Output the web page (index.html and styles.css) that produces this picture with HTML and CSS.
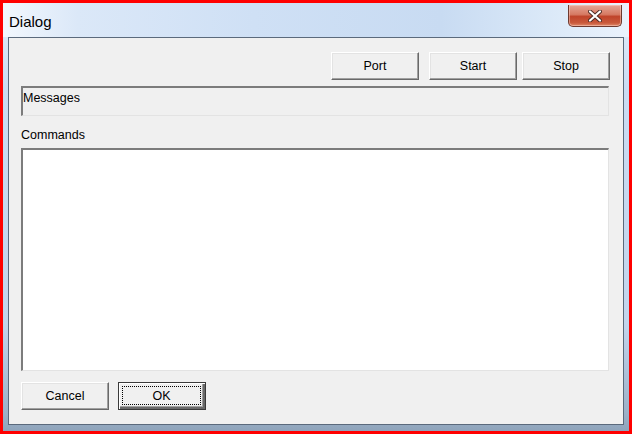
FILE: index.html
```html
<!DOCTYPE html>
<html lang="en">

<head>
  <meta charset="UTF-8">
  <title>Dialog</title>
  <link rel="stylesheet" href="styles.css">
</head>

<body>
  <div class="window">
    <!-- Title bar -->
    <div class="titlebar">
      <span class="title">Dialog</span>
      <button class="close-btn" aria-label="Close">
        <svg width="14" height="12" viewBox="0 0 14 12">
          <path d="M2 1.5 L12 10.5 M12 1.5 L2 10.5" stroke="#4a2a24" stroke-width="4" stroke-linecap="round"/>
          <path d="M2 1.5 L12 10.5 M12 1.5 L2 10.5" stroke="#ffffff" stroke-width="2.2" stroke-linecap="round"/>
        </svg>
      </button>
    </div>

    <!-- Client area -->
    <div class="client">
      <div class="top-buttons">
        <button class="btn">Port</button>
        <button class="btn btn-start">Start</button>
        <button class="btn">Stop</button>
      </div>

      <div class="messages">Messages</div>

      <div class="label">Commands</div>
      <div class="commands"></div>

      <div class="bottom-buttons">
        <button class="btn">Cancel</button>
        <button class="btn btn-default"><span class="focus">OK</span></button>
      </div>
    </div>
  </div>
</body>

</html>
```

FILE: styles.css
```css
body {
  margin: 0;
  padding: 0;
  font-family: "Liberation Sans", Arial, sans-serif;
  background-color: #ff0000;
}

/* Window frame */
.window {
  width: 632px;
  height: 434px;
  box-sizing: border-box;
  border: 3px solid #ff0000;
  padding: 0 5px 6px 5px;
  background: linear-gradient(to bottom, #e4eefa 0%, #cadcf2 20%, #c2d5ec 75%, #9cb1c8 96%, #8fa4bb 100%);
}

/* Title bar */
.titlebar {
  height: 34px;
  display: flex;
  justify-content: space-between;
  align-items: flex-start;
  margin: 0 -5px;
  padding: 0 7px 0 6px;
  background: linear-gradient(to right, #f2f7fd 0%, #dbe8f8 12%, #cfe0f5 40%, #c8dbf2 70%, #deebf9 90%, #eaf2fc 100%);
}

.titlebar .title {
  font-size: 15px;
  color: #000000;
  margin-top: 10px;
}

.close-btn {
  width: 54px;
  height: 22px;
  margin-top: 2px;
  padding: 0;
  border: 1px solid #6e3a30;
  border-top: none;
  border-radius: 0 0 5px 5px;
  background: linear-gradient(to bottom, #e6a797 0%, #d67a63 45%, #c0442a 55%, #c95a3c 85%, #e08a6a 100%);
  box-shadow: inset 0 0 0 1px rgba(255, 220, 210, 0.45);
  display: flex;
  justify-content: center;
  align-items: center;
}

/* Client area */
.client {
  height: 388px;
  box-sizing: border-box;
  border: 1px solid #5b6a7c;
  background-color: #f0f0f0;
  padding: 14px 13px 0 12px;
}

.top-buttons {
  display: flex;
  justify-content: flex-end;
  gap: 5px;
}

.top-buttons .btn-start {
  margin-left: 5px;
}

.btn {
  width: 88px;
  height: 28px;
  padding: 0;
  font-family: "Liberation Sans", Arial, sans-serif;
  font-size: 12.5px;
  color: #000000;
  background-color: #f0f0f0;
  border: 1px solid;
  border-color: #ffffff #696969 #696969 #ffffff;
  box-shadow: inset -1px -1px 0 #a0a0a0, inset 1px 1px 0 #e3e3e3;
}

.btn-default {
  border: 1px solid #3a3a3a;
  box-shadow: inset 1px 1px 0 #ffffff, inset -2px -2px 0 #696969, inset -3px -3px 0 #a0a0a0;
  display: flex;
  padding: 3px 4px 4px 3px;
}

.btn-default .focus {
  flex: 1;
  display: flex;
  justify-content: center;
  align-items: center;
  border: 1px dotted #000000;
}

/* Sunken boxes */
.messages,
.commands {
  box-sizing: border-box;
  margin-right: 1px;
  border-style: solid;
  border-width: 2px 1px 1px 2px;
  border-color: #7c7c7c #e3e3e3 #e3e3e3 #7c7c7c;
}

.messages {
  height: 30px;
  margin-top: 6px;
  padding-top: 3px;
  font-size: 12.5px;
  line-height: 14px;
  background-color: #f0f0f0;
}

.label {
  font-size: 12.5px;
  line-height: 14px;
  margin-top: 12px;
  margin-bottom: 6px;
}

.commands {
  height: 223px;
  background-color: #ffffff;
}

.bottom-buttons {
  display: flex;
  gap: 9px;
  margin-top: 11px;
}
```
